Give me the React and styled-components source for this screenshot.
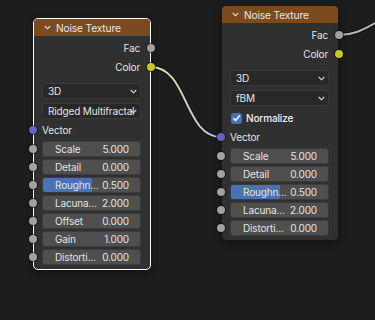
import styled, { createGlobalStyle } from "styled-components"

const GlobalStyle = createGlobalStyle`
  body { margin:0; background:#1d1d1d; }
`

const Canvas = styled.div`
  position:relative;
  width:375px;
  height:320px;
  overflow:hidden;
  background:#1d1d1d;
  font-family:Inter, "DejaVu Sans", sans-serif;
  font-size:10px;
  letter-spacing:-0.15px;
  color:#e4e4e4;
`

const Links = styled.svg`
  position:absolute;
  left:0;
  top:0;
  pointer-events:none;
`

const Node = styled.div`
  position:absolute;
  left:${p => p.$x}px;
  top:${p => p.$y}px;
  width:118px;
  box-sizing:border-box;
  background:#303030;
  border:1px solid ${p => (p.$selected ? "#ffffff" : "#171717")};
  border-radius:5px;
  box-shadow:0 2px 6px rgba(0,0,0,.45);
`

const Header = styled.div`
  height:17px;
  display:flex;
  align-items:center;
  gap:5px;
  padding-left:10px;
  background:#7b4a1e;
  border-radius:4px 4px 0 0;
  color:#e8e8e8;
  font-size:10.2px;
`

const Body = styled.div`
  display:flex;
  flex-direction:column;
  padding:2px 9px 4px 8px;
`

const OutputRow = styled.div`
  position:relative;
  height:19px;
  display:flex;
  align-items:center;
  justify-content:flex-end;
  padding-right:1px;
`

const InputRow = styled.div`
  position:relative;
  height:16px;
  margin-top:3px;
  display:flex;
  align-items:center;
`

const Socket = styled.span`
  position:absolute;
  top:50%;
  ${p => (p.$side === "out" ? "right:-14px;" : `left:${p.$offset ?? -13}px;`)}
  width:8px;
  height:8px;
  margin-top:-4px;
  border-radius:50%;
  background:${p => p.$color};
  box-shadow:0 0 0 1px rgba(0,0,0,.55);
`

const Select = styled.div`
  margin-top:${p => (p.$first ? 7 : 4)}px;
  height:16px;
  box-sizing:border-box;
  display:flex;
  align-items:center;
  padding:0 3px 0 5px;
  background:#282828;
  border:1px solid #3b3b3b;
  border-radius:3px;
`

const SelectText = styled.span`
  flex:1;
  min-width:0;
  white-space:nowrap;
`

const Check = styled.span`
  width:11px;
  height:11px;
  margin-left:1px;
  margin-right:4px;
  display:flex;
  align-items:center;
  justify-content:center;
  background:#4772b3;
  border-radius:3px;
`

const CheckRow = styled.div`
  margin-top:4px;
  height:16px;
  display:flex;
  align-items:center;
  color:#f2f2f2;
  font-weight:500;
`

const Fields = styled.div`
  display:flex;
  flex-direction:column;
  gap:2px;
  margin-top:3px;
`

const Field = styled.div`
  position:relative;
  height:16px;
  box-sizing:border-box;
  display:flex;
  align-items:center;
  justify-content:space-between;
  padding:0 11px 0 12px;
  border:1px solid #3c3c3c;
  border-radius:3px;
  background:${p =>
    p.$fill
      ? `linear-gradient(90deg, #4772b3 ${p.$fill}%, #4f4f4f ${p.$fill}%)`
      : "#4f4f4f"};
`

const Chevron = ({ color = "#dcdcdc" }) => (
  <svg width="7" height="5" viewBox="0 0 7 5" style={{ flex: "none" }}>
    <path d="M0.8 1 L3.5 3.8 L6.2 1" fill="none" stroke={color} strokeWidth="1.1" />
  </svg>
)

const nodes = [
  {
    x: 33,
    y: 18,
    selected: true,
    mode: "Ridged Multifractal",
    inputs: [
      ["Scale", "5.000"],
      ["Detail", "0.000"],
      ["Roughn...", "0.500", 50],
      ["Lacuna...", "2.000"],
      ["Offset", "0.000"],
      ["Gain", "1.000"],
      ["Distorti...", "0.000"],
    ],
  },
  {
    x: 221,
    y: 5,
    mode: "fBM",
    normalize: true,
    inputs: [
      ["Scale", "5.000"],
      ["Detail", "0.000"],
      ["Roughn...", "0.500", 50],
      ["Lacuna...", "2.000"],
      ["Distorti...", "0.000"],
    ],
  },
]

const NoiseNode = ({ node }) => (
  <Node $x={node.x} $y={node.y} $selected={node.selected}>
    <Header>
      <Chevron color="#e6e6e6" />
      Noise Texture
    </Header>
    <Body>
      <OutputRow>
        Fac
        <Socket $side="out" $color="#a1a1a1" />
      </OutputRow>
      <OutputRow>
        Color
        <Socket $side="out" $color="#c7c729" />
      </OutputRow>
      <Select $first>
        <SelectText>3D</SelectText>
        <Chevron />
      </Select>
      <Select>
        <SelectText>{node.mode}</SelectText>
        <Chevron />
      </Select>
      {node.normalize && (
        <CheckRow>
          <Check>
            <svg width="9" height="8" viewBox="0 0 9 8">
              <path d="M1.2 4.2 L3.5 6.4 L7.8 1.4" fill="none" stroke="#fff" strokeWidth="1.5" />
            </svg>
          </Check>
          Normalize
        </CheckRow>
      )}
      <InputRow>
        <Socket $side="in" $color="#6363c7" />
        Vector
      </InputRow>
      <Fields>
        {node.inputs.map(([label, value, fill]) => (
          <Field key={label} $fill={fill}>
            <Socket $side="in" $offset={-14} $color="#a1a1a1" />
            <span>{label}</span>
            <span>{value}</span>
          </Field>
        ))}
      </Fields>
    </Body>
  </Node>
)

export default function App() {
  return (
    <Canvas>
      <GlobalStyle />
      <Links width="375" height="320">
        <defs>
          <linearGradient id="colorLink" gradientUnits="userSpaceOnUse" x1="151" y1="0" x2="221" y2="0">
            <stop offset="0" stopColor="#e2e29a" />
            <stop offset="1" stopColor="#b8b8ea" />
          </linearGradient>
        </defs>
        <path d="M151 67 C188 67 184 137 221 137" fill="none" stroke="#111" strokeWidth="4" />
        <path d="M151 67 C188 67 184 137 221 137" fill="none" stroke="url(#colorLink)" strokeWidth="2" />
        <path d="M339 35 C362 35 372 22 395 14" fill="none" stroke="#111" strokeWidth="4" />
        <path d="M339 35 C362 35 372 22 395 14" fill="none" stroke="#b3b3b3" strokeWidth="2" />
      </Links>
      {nodes.map((n, i) => (
        <NoiseNode key={i} node={n} />
      ))}
    </Canvas>
  )
}
